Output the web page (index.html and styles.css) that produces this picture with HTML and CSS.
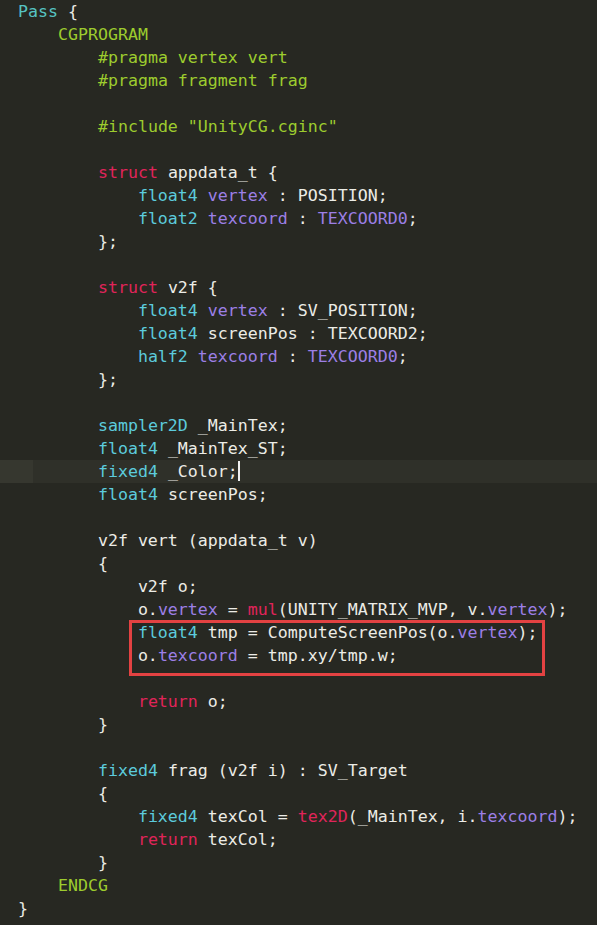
FILE: index.html
```html
<!DOCTYPE html>
<html>
<head>
<meta name="viewport" content="width=device-width, initial-scale=1">
<link rel="stylesheet" href="styles.css">
</head>
<body>

<div class="code">
<div class="ln"><span class="pass">Pass</span> {</div>
<div class="ln">    <span class="cg">CGPROGRAM</span></div>
<div class="ln">        <span class="cg">#pragma vertex vert</span></div>
<div class="ln">        <span class="cg">#pragma fragment frag</span></div>
<div class="ln"> </div>
<div class="ln">        <span class="cg">#include "UnityCG.cginc"</span></div>
<div class="ln"> </div>
<div class="ln">        <span class="kw">struct</span> appdata_t {</div>
<div class="ln">            <span class="ty">float4</span> <span class="pr">vertex</span> : POSITION;</div>
<div class="ln">            <span class="ty">float2</span> <span class="pr">texcoord</span> : <span class="pr">TEXCOORD0</span>;</div>
<div class="ln">        };</div>
<div class="ln"> </div>
<div class="ln">        <span class="kw">struct</span> v2f {</div>
<div class="ln">            <span class="ty">float4</span> <span class="pr">vertex</span> : SV_POSITION;</div>
<div class="ln">            <span class="ty">float4</span> screenPos : TEXCOORD2;</div>
<div class="ln">            <span class="ty">half2</span> <span class="pr">texcoord</span> : <span class="pr">TEXCOORD0</span>;</div>
<div class="ln">        };</div>
<div class="ln"> </div>
<div class="ln">        <span class="ty">sampler2D</span> _MainTex;</div>
<div class="ln">        <span class="ty">float4</span> _MainTex_ST;</div>
<div class="ln cur"><span class="gut"></span>        <span class="ty">fixed4</span> _Color;<span class="caret"></span></div>
<div class="ln">        <span class="ty">float4</span> screenPos;</div>
<div class="ln"> </div>
<div class="ln">        v2f vert (appdata_t v)</div>
<div class="ln">        {</div>
<div class="ln">            v2f o;</div>
<div class="ln">            o.<span class="pr">vertex</span> = <span class="kw">mul</span>(UNITY_MATRIX_MVP, v.<span class="pr">vertex</span>);</div>
<div class="ln">            <span class="ty">float4</span> tmp = ComputeScreenPos(o.<span class="pr">vertex</span>);</div>
<div class="ln">            o.<span class="pr">texcoord</span> = tmp.xy/tmp.w;</div>
<div class="ln"> </div>
<div class="ln">            <span class="kw">return</span> o;</div>
<div class="ln">        }</div>
<div class="ln"> </div>
<div class="ln">        <span class="ty">fixed4</span> frag (v2f i) : SV_Target</div>
<div class="ln">        {</div>
<div class="ln">            <span class="ty">fixed4</span> texCol = <span class="kw">tex2D</span>(_MainTex, i.<span class="pr">texcoord</span>);</div>
<div class="ln">            <span class="kw">return</span> texCol;</div>
<div class="ln">        }</div>
<div class="ln">    <span class="cg">ENDCG</span></div>
<div class="ln">}</div>
<div class="mark"></div>
</div>

</body>
</html>
```

FILE: styles.css
```css
html,body{margin:0;padding:0;background-color:#272822;}
body{width:597px;height:925px;overflow:hidden;}
.code{position:relative;font-family:"DejaVu Sans Mono",monospace;font-size:16.6px;color:#ecece6;}
.ln{height:23px;line-height:23px;padding-left:18px;white-space:pre;position:relative;}
.cur{background-color:#2f3029;}
.cur .gut{position:absolute;left:0;top:0;width:33px;height:23px;background-color:#36372f;}
.caret{display:inline-block;width:2px;height:20px;vertical-align:-4px;background-color:#f0f0f0;}
.pass{color:#56c3c3;}
.cg{color:#9dcc2e;}
.kw{color:#e0245a;}
.ty{color:#5ccbdc;}
.pr{color:#9c7fe6;}
.mark{position:absolute;left:129px;top:620px;width:416px;height:56px;box-sizing:border-box;border:3px solid #e34242;}
```
